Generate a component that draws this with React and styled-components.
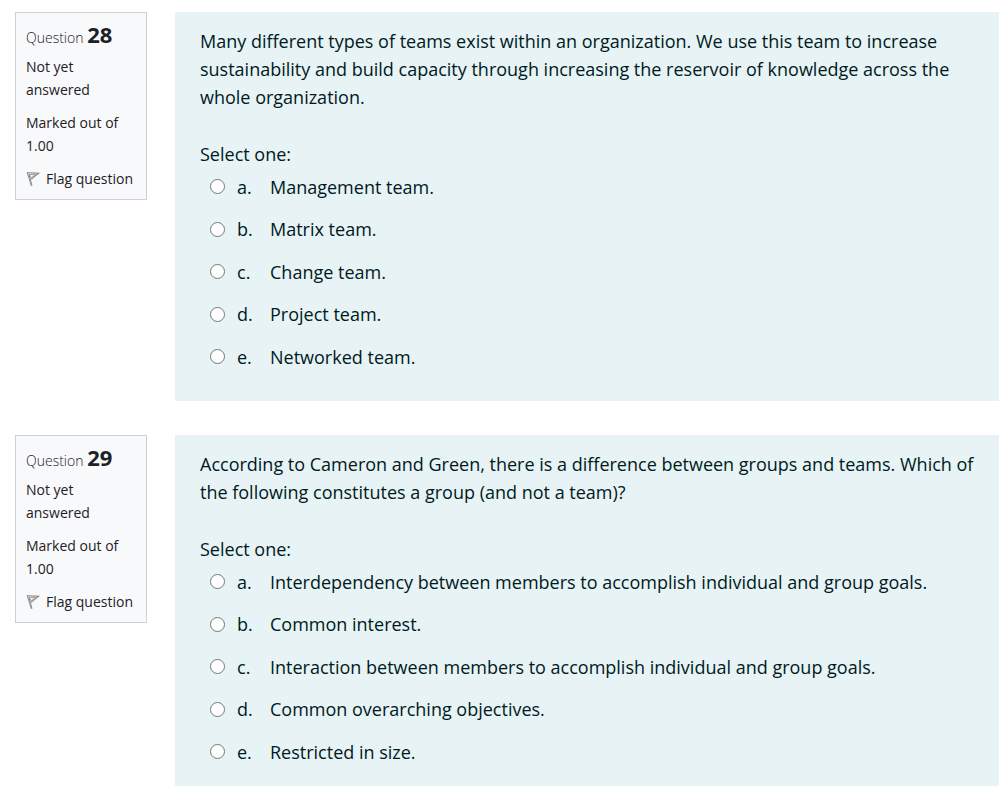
import React from "react";
import styled, { createGlobalStyle } from "styled-components";

const GlobalStyle = createGlobalStyle`
  *, *::before, *::after { box-sizing: border-box; }
  body {
    margin: 0;
    background: #fff;
    color: #1d2125;
    font-family: "Open Sans", "Noto Sans", sans-serif;
    font-size: 18px;
    line-height: 28px;
  }
`;

const Quiz = styled.main`
  display: flex;
  flex-direction: column;
  gap: 34px;
  padding: 12px 9px 34px 15px;
`;

const QuestionRow = styled.section`
  display: flex;
  align-items: flex-start;
  gap: 28px;
`;

const InfoCard = styled.aside`
  flex: 0 0 132px;
  display: flex;
  flex-direction: column;
  align-items: flex-start;
  gap: 10px;
  padding: 9px 10px;
  border: 1px solid #cad0d7;
  background: #f8f9fa;
  font-size: 14px;
  line-height: 23px;
`;

const QuestionTitle = styled.h3`
  margin: 0 0 -5px;
  font-size: 14px;
  font-weight: 300;
  line-height: 24px;
  white-space: nowrap;
`;

const QuestionNumber = styled.span`
  font-size: 22px;
  font-weight: 700;
`;

const InfoText = styled.div`
  line-height: 23px;
`;

const FlagButton = styled.button`
  display: flex;
  align-items: center;
  gap: 6px;
  padding: 0;
  border: 0;
  background: none;
  color: inherit;
  font: inherit;
  white-space: nowrap;
  cursor: pointer;
`;

const Formulation = styled.div`
  flex: 1;
  min-width: 0;
  padding: 15px 25px 30px;
  background: #e7f3f5;
  color: #001a1e;
`;

const Prompt = styled.p`
  margin: 0 0 29px;
`;

const AnswerGroup = styled.fieldset`
  margin: 0;
  padding: 0;
  border: 0;
`;

const AnswerLegend = styled.legend`
  padding: 0;
`;

const AnswerList = styled.div`
  display: flex;
  flex-direction: column;
  gap: 14px;
  padding: 5px 0 0 10px;
`;

const AnswerRow = styled.label`
  display: grid;
  grid-template-columns: 27px 33px 1fr;
  align-items: center;

  &:nth-child(even) {
    line-height: 29px;
  }
`;

const Radio = styled.input`
  appearance: none;
  width: 15px;
  height: 15px;
  margin: 0 0 1px;
  border: 1px solid #767676;
  border-radius: 50%;
  background: #fff;

  &:checked {
    border-color: #0075ff;
    background: radial-gradient(#0075ff 45%, #fff 50%);
  }
`;

const questions = [
  {
    number: 28,
    prompt:
      "Many different types of teams exist within an organization. We use this team to increase sustainability and build capacity through increasing the reservoir of knowledge across the whole organization.",
    answers: [
      "Management team.",
      "Matrix team.",
      "Change team.",
      "Project team.",
      "Networked team.",
    ],
  },
  {
    number: 29,
    prompt:
      "According to Cameron and Green, there is a difference between groups and teams. Which of the following constitutes a group (and not a team)?",
    answers: [
      "Interdependency between members to accomplish individual and group goals.",
      "Common interest.",
      "Interaction between members to accomplish individual and group goals.",
      "Common overarching objectives.",
      "Restricted in size.",
    ],
  },
];

function FlagIcon() {
  return (
    <svg width="14" height="16" viewBox="0 0 14 16" fill="none" stroke="#808080" aria-hidden="true">
      <path d="M1.2 1.5 L5.4 15 M2.8 3 L6 14.6" strokeWidth="0.9" />
      <path d="M1 1.8 L12.6 2.2 L5 8.4" strokeWidth="1.1" />
      <path d="M3.4 3.4 L9.4 3.4 L5 6.8 Z" strokeWidth="0.7" />
    </svg>
  );
}

function Question({ number, prompt, answers }) {
  return (
    <QuestionRow>
      <InfoCard>
        <QuestionTitle>
          Question <QuestionNumber>{number}</QuestionNumber>
        </QuestionTitle>
        <InfoText>Not yet answered</InfoText>
        <InfoText>Marked out of 1.00</InfoText>
        <FlagButton type="button">
          <FlagIcon />
          Flag question
        </FlagButton>
      </InfoCard>
      <Formulation>
        <Prompt>{prompt}</Prompt>
        <AnswerGroup>
          <AnswerLegend>Select one:</AnswerLegend>
          <AnswerList>
            {answers.map((answer, index) => (
              <AnswerRow key={answer}>
                <Radio type="radio" name={`question-${number}`} value={index} />
                <span>{"abcde"[index]}.</span>
                <span>{answer}</span>
              </AnswerRow>
            ))}
          </AnswerList>
        </AnswerGroup>
      </Formulation>
    </QuestionRow>
  );
}

export default function App() {
  return (
    <>
      <GlobalStyle />
      <Quiz>
        {questions.map((question) => (
          <Question key={question.number} {...question} />
        ))}
      </Quiz>
    </>
  );
}
